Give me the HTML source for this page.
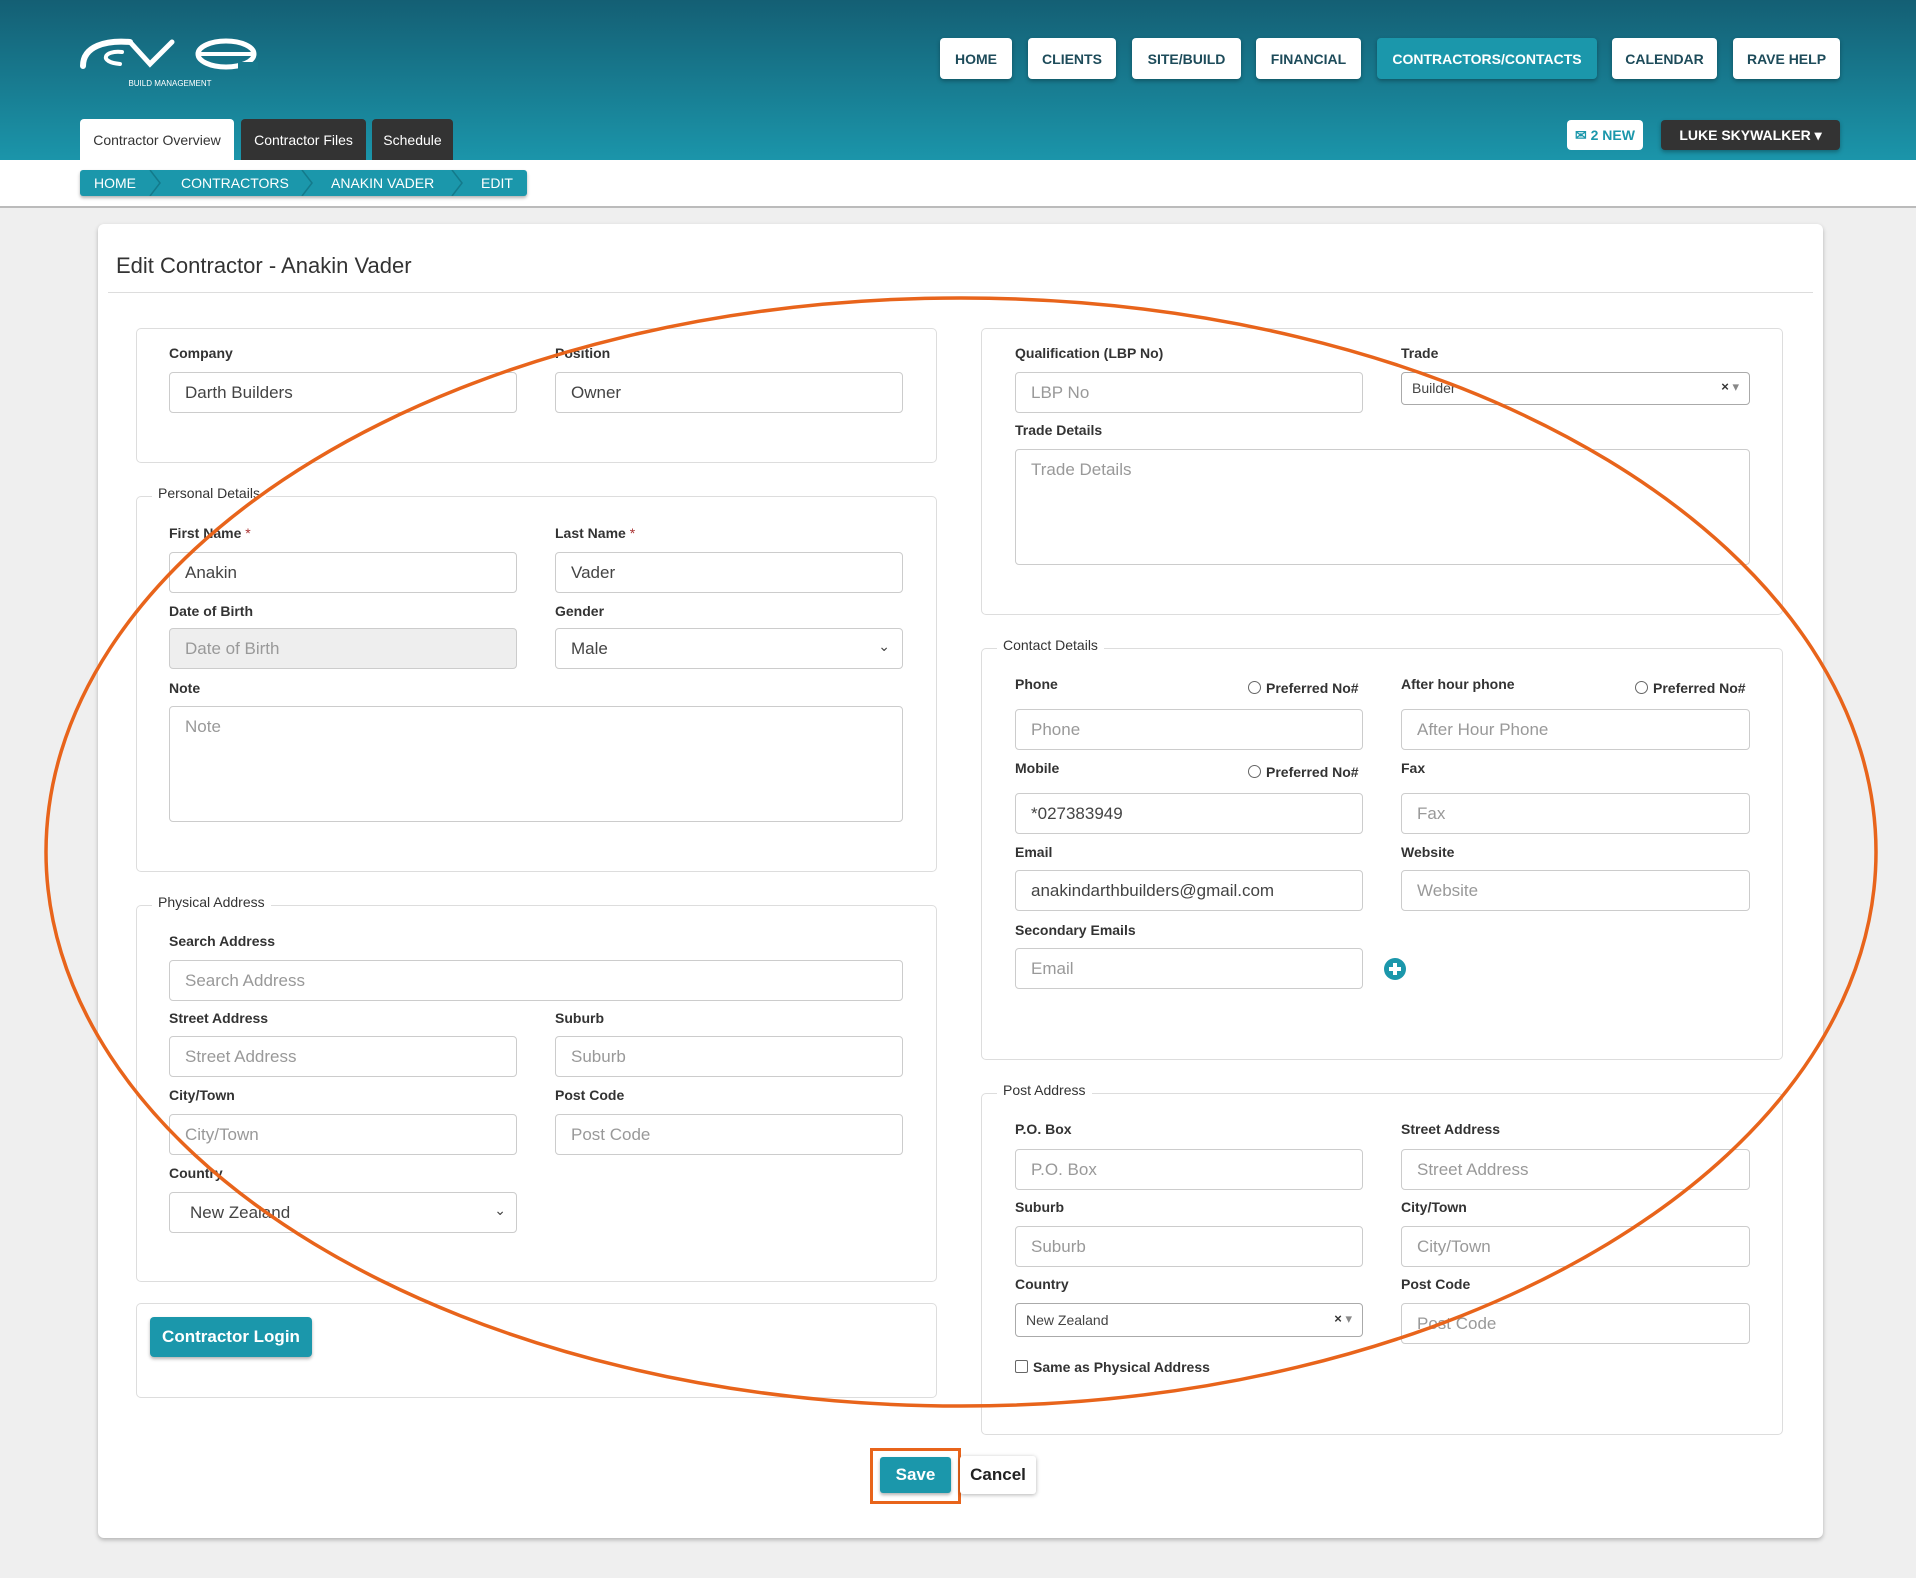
<!DOCTYPE html>
<html><head><meta charset="utf-8">
<style>
*{box-sizing:border-box;margin:0;padding:0}
body{width:1916px;height:1578px;position:relative;background:#efefef;font-family:"Liberation Sans",Arial,sans-serif;overflow:hidden;color:#333}
.hdr{position:absolute;left:0;top:0;width:1916px;height:160px;background:linear-gradient(#145f74,#1b95aa)}
.nav{position:absolute;top:38px;height:41px;background:#fff;border-radius:4px;color:#1d4b5a;font-weight:bold;font-size:14px;display:flex;align-items:center;justify-content:center;box-shadow:0 2px 4px rgba(0,0,0,.3)}
.nav.act{background:#1b97ab;color:#fff}
.tab{position:absolute;top:119px;height:41px;border-radius:4px 4px 0 0;font-size:14px;display:flex;align-items:center;justify-content:center;background:#333;color:#fff}
.wbar{position:absolute;left:0;top:160px;width:1916px;height:48px;background:#fff;border-bottom:2px solid #bbb}
.bc{position:absolute;left:80px;top:170px;width:447px;height:26px;background:#1b97ab;border-radius:3px;box-shadow:0 2px 3px rgba(0,0,0,.3);color:#fff;font-size:14px}
.bc span{position:absolute;top:5px}
.card{position:absolute;left:98px;top:224px;width:1725px;height:1314px;background:#fff;border-radius:6px;box-shadow:0 2px 4px rgba(0,0,0,.25)}
.fs{position:absolute;border:1px solid #ddd;border-radius:5px;background:#fff}
.lg{position:absolute;font-size:14px;color:#333;background:#fff;padding:0 6px}
.l{position:absolute;font-size:14px;font-weight:bold;color:#333}
.l .r{color:#a33;font-weight:normal}
.i{position:absolute;height:41px;border:1px solid #ccc;border-radius:4px;font-size:17px;color:#999;padding:10px 15px 0;background:#fff;white-space:nowrap}
.i.v{color:#444}
.rad{position:absolute;font-size:14px;font-weight:bold;color:#333}
.rad i{display:inline-block;width:13px;height:13px;border:1px solid #666;border-radius:50%;vertical-align:-1px;margin-right:5px}
</style></head><body>
<div class="hdr"></div>
<svg style="position:absolute;left:78px;top:34px" width="180" height="56" viewBox="0 0 180 56">
<g fill="none" stroke="#fff" stroke-linecap="round">
<path d="M5 32 C5 12 28 6 52 8" stroke-width="6"/>
<path d="M44 18 C26 16 20 28 42 30" stroke-width="4"/>
<path d="M52 8 L72 30 L94 8" stroke-width="5"/>
<ellipse cx="148" cy="20" rx="28" ry="13" stroke-width="5"/>
<path d="M122 20 L174 20" stroke-width="4"/>
</g>
<path d="M160 28 L180 28 L180 36 L160 36Z" fill="#17798d"/>
<text x="92" y="52" fill="#fff" font-size="8" text-anchor="middle" font-family="Liberation Sans">BUILD MANAGEMENT</text>
</svg>
<div class="nav" style="left:940px;width:72px">HOME</div>
<div class="nav" style="left:1028px;width:88px">CLIENTS</div>
<div class="nav" style="left:1132px;width:109px">SITE/BUILD</div>
<div class="nav" style="left:1256px;width:105px">FINANCIAL</div>
<div class="nav act" style="left:1377px;width:220px">CONTRACTORS/CONTACTS</div>
<div class="nav" style="left:1612px;width:105px">CALENDAR</div>
<div class="nav" style="left:1733px;width:107px">RAVE HELP</div>
<div class="nav" style="left:1567px;top:120px;width:76px;height:30px;font-size:14px;color:#1b97ab;box-shadow:none">✉ 2 NEW</div>
<div class="nav" style="left:1661px;top:120px;width:179px;height:30px;background:#333;color:#fff;font-size:14px">LUKE SKYWALKER ▾</div>
<div class="tab" style="left:80px;width:154px;background:#fff;color:#333">Contractor Overview</div>
<div class="tab" style="left:241px;width:125px">Contractor Files</div>
<div class="tab" style="left:372px;width:81px">Schedule</div>
<div class="wbar"></div>
<div class="bc">
<span style="left:14px">HOME</span><span style="left:101px">CONTRACTORS</span><span style="left:251px">ANAKIN VADER</span><span style="left:401px">EDIT</span>
<svg style="position:absolute;left:0;top:0" width="447" height="26"><g fill="none" stroke="#137a8b" stroke-width="1.5"><path d="M70 0 L80 13 L70 26"/><path d="M222 0 L232 13 L222 26"/><path d="M372 0 L382 13 L372 26"/></g></svg>
</div>

<div class="card"></div>
<div style="position:absolute;left:116px;top:253px;font-size:22px;color:#333">Edit Contractor - Anakin Vader</div>
<div style="position:absolute;left:108px;top:292px;width:1705px;height:1px;background:#ddd"></div>

<div class="fs" style="left:136px;top:328px;width:801px;height:135px"></div>
<div class="l" style="left:169px;top:345px">Company</div>
<div class="l" style="left:555px;top:345px">Position</div>
<div class="i v" style="left:169px;top:372px;width:348px">Darth Builders</div>
<div class="i v" style="left:555px;top:372px;width:348px">Owner</div>

<div class="fs" style="left:136px;top:496px;width:801px;height:376px"></div>
<div class="lg" style="left:152px;top:485px">Personal Details</div>
<div class="l" style="left:169px;top:525px">First Name <span class="r">*</span></div>
<div class="l" style="left:555px;top:525px">Last Name <span class="r">*</span></div>
<div class="i v" style="left:169px;top:552px;width:348px">Anakin</div>
<div class="i v" style="left:555px;top:552px;width:348px">Vader</div>
<div class="l" style="left:169px;top:603px">Date of Birth</div>
<div class="l" style="left:555px;top:603px">Gender</div>
<div class="i" style="left:169px;top:628px;width:348px;background:#eee">Date of Birth</div>
<div class="i v" style="left:555px;top:628px;width:348px">Male<span style="position:absolute;right:12px;top:9px;font-size:14px">&#8964;</span></div>
<div class="l" style="left:169px;top:680px">Note</div>
<div class="i" style="left:169px;top:706px;width:734px;height:116px">Note</div>

<div class="fs" style="left:136px;top:905px;width:801px;height:377px"></div>
<div class="lg" style="left:152px;top:894px">Physical Address</div>
<div class="l" style="left:169px;top:933px">Search Address</div>
<div class="i" style="left:169px;top:960px;width:734px">Search Address</div>
<div class="l" style="left:169px;top:1010px">Street Address</div>
<div class="l" style="left:555px;top:1010px">Suburb</div>
<div class="i" style="left:169px;top:1036px;width:348px">Street Address</div>
<div class="i" style="left:555px;top:1036px;width:348px">Suburb</div>
<div class="l" style="left:169px;top:1087px">City/Town</div>
<div class="l" style="left:555px;top:1087px">Post Code</div>
<div class="i" style="left:169px;top:1114px;width:348px">City/Town</div>
<div class="i" style="left:555px;top:1114px;width:348px">Post Code</div>
<div class="l" style="left:169px;top:1165px">Country</div>
<div class="i v" style="left:169px;top:1192px;width:348px;padding-left:20px">New Zealand<span style="position:absolute;right:10px;top:9px;font-size:14px">&#8964;</span></div>

<div class="fs" style="left:136px;top:1303px;width:801px;height:95px"></div>
<div style="position:absolute;left:150px;top:1317px;width:162px;height:40px;background:#1b97ab;border-radius:4px;color:#fff;font-weight:bold;font-size:17px;display:flex;align-items:center;justify-content:center;box-shadow:0 2px 3px rgba(0,0,0,.3)">Contractor Login</div>

<div class="fs" style="left:981px;top:328px;width:802px;height:287px"></div>
<div class="l" style="left:1015px;top:345px">Qualification (LBP No)</div>
<div class="l" style="left:1401px;top:345px">Trade</div>
<div class="i" style="left:1015px;top:372px;width:348px">LBP No</div>
<div class="i v" style="left:1401px;top:372px;width:349px;height:33px;font-size:14px;padding:7px 10px;border-color:#aaa">Builder<span style="position:absolute;right:10px;top:6px;font-size:13px;color:#333"><b>×</b> <span style="color:#888">▾</span></span></div>
<div class="l" style="left:1015px;top:422px">Trade Details</div>
<div class="i" style="left:1015px;top:449px;width:735px;height:116px">Trade Details</div>

<div class="fs" style="left:981px;top:648px;width:802px;height:412px"></div>
<div class="lg" style="left:997px;top:637px">Contact Details</div>
<div class="l" style="left:1015px;top:676px">Phone</div>
<div class="rad" style="left:1248px;top:680px"><i></i>Preferred No#</div>
<div class="l" style="left:1401px;top:676px">After hour phone</div>
<div class="rad" style="left:1635px;top:680px"><i></i>Preferred No#</div>
<div class="i" style="left:1015px;top:709px;width:348px">Phone</div>
<div class="i" style="left:1401px;top:709px;width:349px">After Hour Phone</div>
<div class="l" style="left:1015px;top:760px">Mobile</div>
<div class="rad" style="left:1248px;top:764px"><i></i>Preferred No#</div>
<div class="l" style="left:1401px;top:760px">Fax</div>
<div class="i v" style="left:1015px;top:793px;width:348px">*027383949</div>
<div class="i" style="left:1401px;top:793px;width:349px">Fax</div>
<div class="l" style="left:1015px;top:844px">Email</div>
<div class="l" style="left:1401px;top:844px">Website</div>
<div class="i v" style="left:1015px;top:870px;width:348px">anakindarthbuilders@gmail.com</div>
<div class="i" style="left:1401px;top:870px;width:349px">Website</div>
<div class="l" style="left:1015px;top:922px">Secondary Emails</div>
<div class="i" style="left:1015px;top:948px;width:348px">Email</div>
<svg style="position:absolute;left:1383px;top:957px" width="24" height="24"><circle cx="12" cy="12" r="11" fill="#1b97ab"/><path d="M12 6V18M6 12H18" stroke="#fff" stroke-width="4"/></svg>

<div class="fs" style="left:981px;top:1093px;width:802px;height:342px"></div>
<div class="lg" style="left:997px;top:1082px">Post Address</div>
<div class="l" style="left:1015px;top:1121px">P.O. Box</div>
<div class="l" style="left:1401px;top:1121px">Street Address</div>
<div class="i" style="left:1015px;top:1149px;width:348px">P.O. Box</div>
<div class="i" style="left:1401px;top:1149px;width:349px">Street Address</div>
<div class="l" style="left:1015px;top:1199px">Suburb</div>
<div class="l" style="left:1401px;top:1199px">City/Town</div>
<div class="i" style="left:1015px;top:1226px;width:348px">Suburb</div>
<div class="i" style="left:1401px;top:1226px;width:349px">City/Town</div>
<div class="l" style="left:1015px;top:1276px">Country</div>
<div class="l" style="left:1401px;top:1276px">Post Code</div>
<div class="i v" style="left:1015px;top:1303px;width:348px;height:34px;font-size:14px;padding:8px 10px;border-color:#aaa">New Zealand<span style="position:absolute;right:10px;top:7px;font-size:13px;color:#333"><b>×</b> <span style="color:#888">▾</span></span></div>
<div class="i" style="left:1401px;top:1303px;width:349px">Post Code</div>
<div class="rad" style="left:1015px;top:1359px"><i style="border-radius:2px"></i>Same as Physical Address</div>

<div style="position:absolute;left:870px;top:1448px;width:91px;height:56px;border:3px solid #e8641b"></div>
<div style="position:absolute;left:880px;top:1457px;width:71px;height:36px;background:#1b97ab;border-radius:3px;color:#fff;font-weight:bold;font-size:17px;display:flex;align-items:center;justify-content:center;box-shadow:0 2px 3px rgba(0,0,0,.3)">Save</div>
<div style="position:absolute;left:960px;top:1456px;width:76px;height:38px;background:#fff;border-radius:3px;color:#222;font-weight:bold;font-size:17px;display:flex;align-items:center;justify-content:center;box-shadow:0 1px 4px rgba(0,0,0,.3)">Cancel</div>

<svg style="position:absolute;left:0;top:0;pointer-events:none" width="1916" height="1578"><ellipse cx="961" cy="852" rx="915" ry="554" fill="none" stroke="#e8641b" stroke-width="3.5"/></svg>
</body></html>
